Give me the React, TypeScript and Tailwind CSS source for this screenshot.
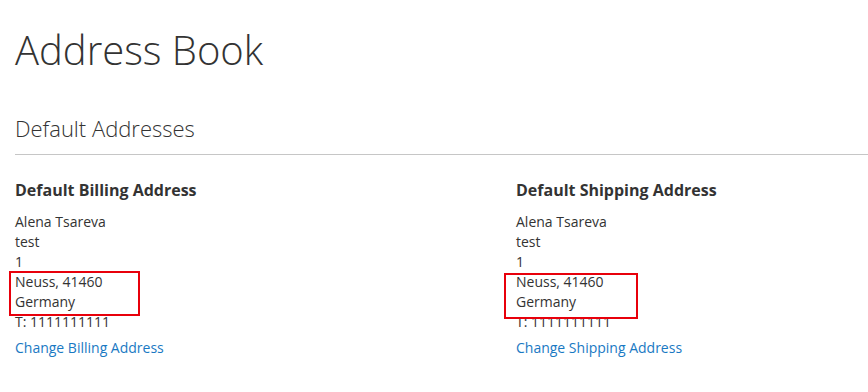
import React from "react";

const font = { fontFamily: "'Open Sans', 'Liberation Sans', sans-serif" };

function Marked({ lines, fill }: { lines: string[]; fill?: boolean }) {
  return (
    <div className="relative w-fit">
      <span
        className={`absolute z-10 border-2 border-[#e8000b] ${
          fill
            ? "bg-white left-[-12px] right-[-34px] top-[1px] bottom-[-7px]"
            : "left-[-6px] right-[-37px] top-[-1px] bottom-[-4px]"
        }`}
      />
      {lines.map((l) => (
        <div key={l} className="relative z-20">
          {l}
        </div>
      ))}
    </div>
  );
}

function AddressBox({
  title,
  link,
  fill,
}: {
  title: string;
  link: string;
  fill?: boolean;
}) {
  return (
    <div>
      <h3 className="text-[16px] font-bold leading-[1.1] text-[#333] mb-[12px]">
        {title}
      </h3>
      <div className="text-[14px] leading-[20px] text-[#333]">
        <div>Alena Tsareva</div>
        <div>test</div>
        <div>1</div>
        <Marked lines={["Neuss, 41460", "Germany"]} fill={fill} />
        <div>
          T: <span>1111111111</span>
        </div>
      </div>
      <a href="#" className="block mt-[6px] text-[14px] leading-[20px] text-[#1979c3]">
        {link}
      </a>
    </div>
  );
}

export default function App() {
  return (
    <div className="w-[868px] h-[392px] overflow-hidden bg-white pl-[15px]" style={font}>
      <h1 className="pt-[28px] text-[40px] font-light leading-[1.1] text-[#333]">
        Address Book
      </h1>
      <div className="mt-[44px] border-b border-[#c6c6c6] pb-[14px]">
        <strong className="block text-[22px] font-light leading-[1.1] text-[#333]">
          Default Addresses
        </strong>
      </div>
      <div className="flex pt-[27px]">
        <div className="w-[501px] shrink-0">
          <AddressBox title="Default Billing Address" link="Change Billing Address" />
        </div>
        <div className="flex-1">
          <AddressBox
            title="Default Shipping Address"
            link="Change Shipping Address"
            fill
          />
        </div>
      </div>
    </div>
  );
}
